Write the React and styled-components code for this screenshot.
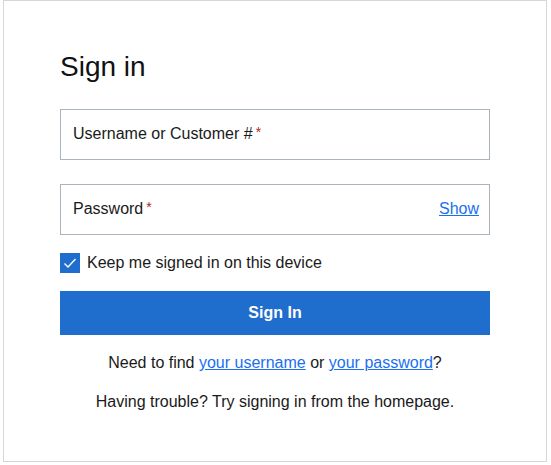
import React, {useState} from 'react';
import styled, {createGlobalStyle} from 'styled-components';

const GlobalStyle = createGlobalStyle`
    body {
        margin: 0;
        background: #fff;
        font-family: "Liberation Sans", Arial, sans-serif;
        color: #1a1a1a;
    }
`

const Card = styled.div`
    box-sizing: border-box;
    width: 544px;
    height: 462px;
    margin-left: 3px;
    border: 1px solid #d6d6d6;
    padding: 50px 56px 0;
`

const Title = styled.h1`
    margin: 0 0 26px;
    font-size: 28px;
    line-height: 32px;
    font-weight: normal;
    color: #111;
`

const Field = styled.div`
    box-sizing: border-box;
    height: 51px;
    border: 1px solid #aab4bf;
    display: flex;
    align-items: center;
    justify-content: space-between;
    padding: 0 10px 2px 12px;
    margin-bottom: ${props => props.$gap || 0}px;
`

const Label = styled.span`
    font-size: 16px;
    color: #1a1a1a;
`

const Required = styled.span`
    color: #b3261e;
    font-size: 14px;
    margin-left: 3px;
    position: relative;
    top: -2px;
`

const TextLink = styled.a`
    color: #1a6ff0;
    text-decoration: underline;
    font-size: 16px;
    cursor: pointer;
`

const CheckRow = styled.label`
    display: flex;
    align-items: center;
    gap: 7px;
    margin-top: 18px;
    font-size: 16px;
    cursor: pointer;
`

const Box = styled.span`
    width: 20px;
    height: 20px;
    background: ${props => props.$on ? '#1f6dcc' : '#fff'};
    border: ${props => props.$on ? 'none' : '1px solid #aab4bf'};
    box-sizing: border-box;
    display: flex;
    align-items: center;
    justify-content: center;
`

const Button = styled.button`
    display: block;
    width: 100%;
    height: 44px;
    margin-top: 18px;
    border: none;
    background: #1f6dcc;
    color: #fff;
    font-family: "Liberation Sans", Arial, sans-serif;
    font-weight: bold;
    font-size: 16px;
    cursor: pointer;
`

const Note = styled.p`
    margin: ${props => props.$top}px 0 0;
    text-align: center;
    font-size: 16px;
    line-height: 22px;
`

function SignIn(){
    const [keep, setKeep] = useState(true);

    return (
        <Card>
            <Title>Sign in</Title>
            <Field $gap={24}>
                <Label>Username or Customer #<Required>*</Required></Label>
            </Field>
            <Field>
                <Label>Password<Required>*</Required></Label>
                <TextLink>Show</TextLink>
            </Field>
            <CheckRow onClick={() => setKeep(!keep)}>
                <Box $on={keep}>
                    {keep &&
                    <svg width="14" height="12" viewBox="0 0 14 12">
                        <path d="M1.5 6.5 L5 10 L12.5 2" fill="none" stroke="#fff" strokeWidth="1.4"/>
                    </svg>}
                </Box>
                Keep me signed in on this device
            </CheckRow>
            <Button>Sign In</Button>
            <Note $top={17}>
                Need to find <TextLink>your username</TextLink> or <TextLink>your password</TextLink>?
            </Note>
            <Note $top={17}>Having trouble? Try signing in from the homepage.</Note>
        </Card>
    )
}

export default function App(){
    return (
        <>
            <GlobalStyle/>
            <SignIn/>
        </>
    )
}
